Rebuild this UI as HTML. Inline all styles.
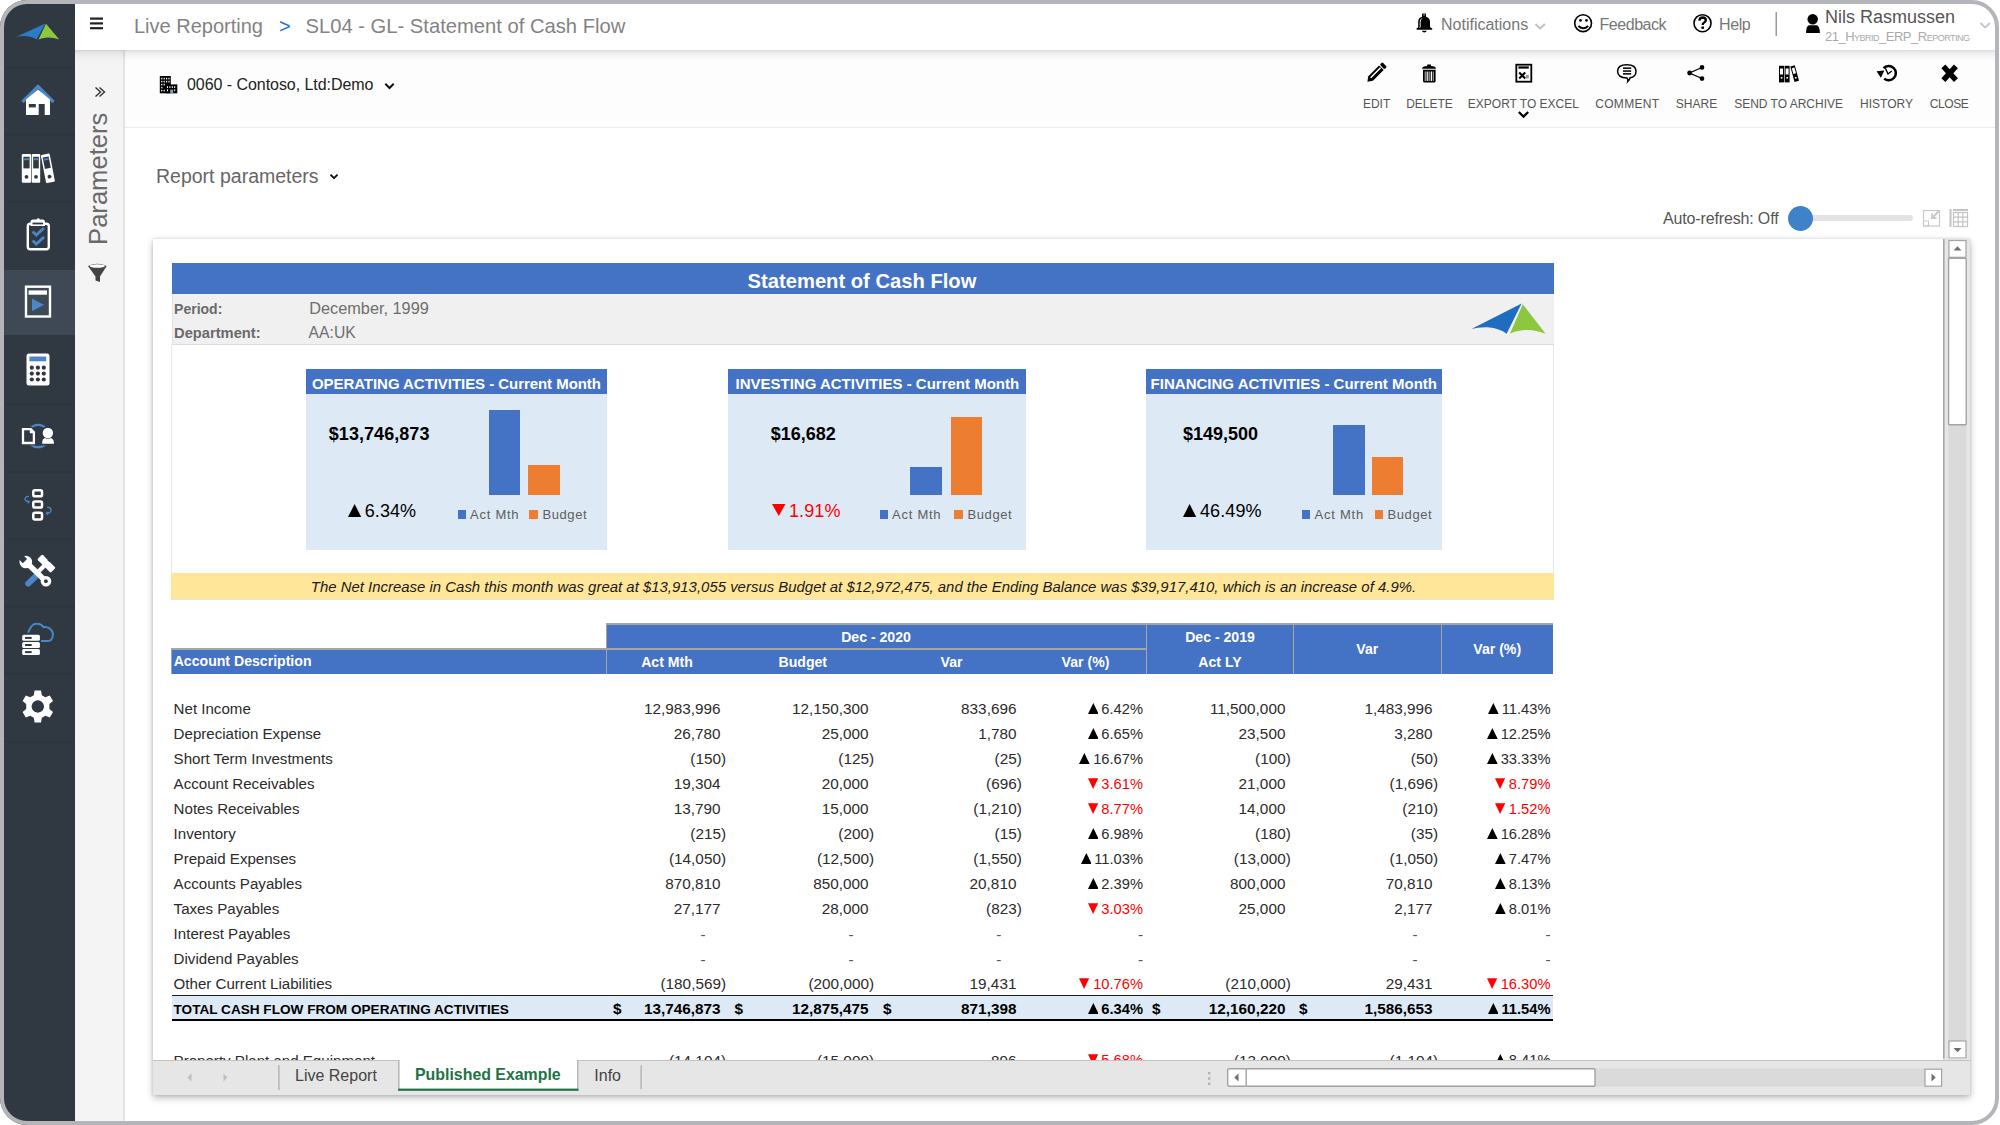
<!DOCTYPE html>
<html><head><meta charset="utf-8">
<style>
*{box-sizing:border-box;margin:0;padding:0}
html,body{width:2000px;height:1125px;overflow:hidden;background:#fff;font-family:"Liberation Sans",sans-serif}
.a{position:absolute}
.t{position:absolute;white-space:nowrap;line-height:1}
#side{left:0;top:0;width:75px;height:1125px;background:#303841}
#top{left:75px;top:0;width:1925px;height:50px;background:#fff;z-index:3}
#topsh{left:75px;top:50px;width:1925px;height:12px;background:linear-gradient(rgba(0,0,0,0.15),rgba(0,0,0,0.09) 1.5px,rgba(0,0,0,0.05) 4px,rgba(0,0,0,0.02) 8px,rgba(0,0,0,0) 12px);z-index:3}
#param{left:75px;top:50px;width:50px;height:1075px;background:#f4f4f4;border-right:2px solid #e3e3e3}
#tool{left:125px;top:50px;width:1875px;height:78px;background:#fdfdfd;border-bottom:1px solid #ebebeb}
.lbl{position:absolute;top:98px;font-size:12px;color:#555;white-space:nowrap;line-height:1}
.ico{position:absolute}
</style></head><body>

<!-- sidebar -->
<div id="side" class="a"></div>
<svg class="a" style="left:0;top:0;z-index:2" width="75" height="1125">
<rect x="0" y="270" width="75" height="65" fill="#3e4955"/>
<g fill="#2c333c">
<rect x="0" y="67" width="75" height="1"/><rect x="0" y="134.4" width="75" height="1"/><rect x="0" y="201.8" width="75" height="1"/>
<rect x="0" y="404" width="75" height="1"/><rect x="0" y="471.4" width="75" height="1"/><rect x="0" y="538.8" width="75" height="1"/>
<rect x="0" y="606.2" width="75" height="1"/><rect x="0" y="673.6" width="75" height="1"/><rect x="0" y="741" width="75" height="1"/>
</g>
<!-- logo -->
<g transform="translate(16 23.5) scale(0.5836 0.53) translate(-1471.4 -303.6)">
<path d="M1471.4 329 L1521.6 303.6 L1506.6 333.8 Q1500 328.5 1487.6 327.3 Q1478 327 1471.4 329Z" fill="#2a7bc8"/>
<path d="M1522.8 304.2 L1545.6 333.8 Q1535 329.5 1525.1 330 Q1516 330.5 1509.9 333.8Z" fill="#8dc63f"/>
</g>
<!-- home -->
<path d="M22.5 102 L38 86.5 L53.5 102" fill="none" stroke="#4a86c8" stroke-width="3.2" stroke-linejoin="miter"/>
<path d="M26 99.5 L38 89.5 L50 99.5 V115 H26Z" fill="#fff"/>
<rect x="28.8" y="104" width="7" height="3.4" fill="#303841"/>
<rect x="38.7" y="104" width="6" height="11" fill="#303841"/>
<!-- binders -->
<g>
<rect x="21.8" y="154" width="9.3" height="28.7" rx="1" fill="#fff"/>
<rect x="23.4" y="156.8" width="6.2" height="11.6" fill="#303841"/>
<rect x="24" y="158.2" width="5" height="2" fill="#4a86c8"/>
<circle cx="26.5" cy="176.8" r="1.9" fill="#303841"/>
<rect x="31.7" y="154" width="8.5" height="28.7" rx="1" fill="#fff"/>
<rect x="33.2" y="156.8" width="5.6" height="11.6" fill="#303841"/>
<rect x="33.7" y="158.2" width="4.6" height="2" fill="#4a86c8"/>
<circle cx="36" cy="176.8" r="1.9" fill="#303841"/>
<g transform="rotate(-11 47.8 168)">
<rect x="43.3" y="154" width="9" height="28.7" rx="1" fill="#fff"/>
<rect x="44.8" y="156.8" width="6" height="11.6" fill="#303841"/>
<rect x="45.3" y="158.2" width="5" height="2" fill="#4a86c8"/>
<circle cx="47.8" cy="176.8" r="1.9" fill="#303841"/>
</g>
</g>
<!-- clipboard -->
<rect x="27.8" y="223.8" width="21" height="25.4" rx="2.5" fill="none" stroke="#fff" stroke-width="2.4"/>
<path d="M30.5 226 V222 Q30.5 219.5 33 219.5 H36.5 Q38 217 40 219.5 H43 Q45 219.5 45 222 V226Z" fill="#fff"/>
<rect x="32.5" y="222.6" width="10.5" height="1.8" fill="#303841"/>
<path d="M32.6 231.5 L36.3 235 L44 228" fill="none" stroke="#4a86c8" stroke-width="3"/>
<path d="M32.6 240.5 L36.3 244 L44 237" fill="none" stroke="#4a86c8" stroke-width="3"/>
<!-- report -->
<rect x="26" y="286.7" width="24" height="29.8" fill="none" stroke="#fff" stroke-width="2.4"/>
<rect x="28.6" y="290.4" width="18.4" height="4.3" fill="#fff"/>
<path d="M32 298.5 L44 304.8 L32 311.2Z" fill="#4a86c8"/>
<!-- calculator -->
<rect x="26.5" y="353.6" width="23" height="32" rx="2.5" fill="#fff"/>
<rect x="29.4" y="356.5" width="16.8" height="4.8" fill="#4a86c8"/>
<g fill="#303841">
<circle cx="31.8" cy="367.7" r="2.1"/><circle cx="37.9" cy="367.7" r="2.1"/><circle cx="43.8" cy="367.7" r="2.1"/>
<circle cx="31.8" cy="373.6" r="2.1"/><circle cx="37.9" cy="373.6" r="2.1"/><circle cx="43.8" cy="373.6" r="2.1"/>
<circle cx="31.8" cy="379.5" r="2.1"/><circle cx="37.9" cy="379.5" r="2.1"/><circle cx="43.8" cy="379.5" r="2.1"/>
</g>
<!-- doc-user -->
<circle cx="38.1" cy="436" r="11.2" fill="none" stroke="#4a86c8" stroke-width="2.2"/>
<path d="M20.6 426.6 H31.5 L36.6 431.8 V445.6 H20.6Z" fill="#303841"/>
<path d="M23 429.2 H30.8 L33.9 432.3 V443 H23Z" fill="none" stroke="#fff" stroke-width="2.3"/>
<path d="M29.8 429.5 H31 L33.6 432.1 V433.2 H29.8Z" fill="#fff"/>
<circle cx="47.9" cy="433.1" r="7" fill="#303841"/>
<path d="M40.6 445.5 Q40.2 436 47.9 436 Q55.6 436 55.2 445.5Z" fill="#303841"/>
<circle cx="47.9" cy="433" r="5.2" fill="#fff"/>
<path d="M42.2 443.8 Q42 438.6 45 437.9 Q47.9 439.6 50.8 437.9 Q53.9 438.6 54 443.8Z" fill="#fff"/>
<!-- workflow -->
<g fill="none" stroke="#fff" stroke-width="2.5">
<rect x="33.3" y="490.3" width="8.7" height="6" rx="1.6"/>
<rect x="33.3" y="501.5" width="8.7" height="6" rx="1.6"/>
<rect x="33.3" y="512.7" width="8.7" height="6.7" rx="1.6"/>
</g>
<path d="M29 496.5 Q24.8 496.2 25 499.2 Q25.3 501.5 28.6 501.8" fill="none" stroke="#4a86c8" stroke-width="1.3"/>
<path d="M27.6 500.4 L29.3 501.9 L27.6 503.2" fill="none" stroke="#4a86c8" stroke-width="1.1"/>
<path d="M46.2 513.2 Q51.3 513.2 51 509.8 Q50.6 507.3 47 507.2" fill="none" stroke="#4a86c8" stroke-width="1.3"/>
<path d="M48.2 512 L46.3 513.3 L48 514.8" fill="none" stroke="#4a86c8" stroke-width="1.1"/>
<!-- tools -->
<g transform="rotate(45 46.5 563.5)"><rect x="37" y="560" width="19" height="7.2" rx="1.2" fill="#fff"/><rect x="44.5" y="556" width="3" height="4.5" fill="#303841"/></g>
<path d="M46.5 563.5 L37 573" stroke="#fff" stroke-width="4.2"/>
<path d="M35 577 L28.2 583.6" stroke="#303841" stroke-width="9" stroke-linecap="round"/>
<path d="M35 577 L28.2 583.6" stroke="#4a86c8" stroke-width="6" stroke-linecap="round"/>
<path d="M27.5 563.5 L45.8 581.2" stroke="#fff" stroke-width="5.4"/>
<circle cx="25.8" cy="562" r="6.3" fill="#fff"/>
<path d="M23.6 559.8 L19 555.2 M23.6 559.8 L28 555.5" stroke="#303841" stroke-width="0"/>
<g transform="rotate(-45 25.8 562)"><rect x="22.8" y="553" width="6" height="7.8" fill="#303841"/></g>
<circle cx="46" cy="581.3" r="5.3" fill="#fff"/>
<circle cx="45.9" cy="581.2" r="1.9" fill="#303841"/>
<!-- cloud -->
<path d="M28.2 632.6 Q31.5 623.2 37 623.8 Q41.5 624 43.6 627.2 Q47.6 626 50.8 629.5 Q53.8 633 52.6 637 Q51.5 641.1 47.5 641.1 H40.3" fill="none" stroke="#4a86c8" stroke-width="2"/>
<path d="M21 633.6 H41.1 V656.1 H21Z" fill="#303841"/>
<g fill="#fff">
<rect x="22.2" y="634.8" width="17.7" height="6" rx="1.5"/>
<rect x="22.2" y="641.9" width="17.7" height="6" rx="1.5"/>
<rect x="22.2" y="649" width="17.7" height="6" rx="1.5"/>
</g>
<g fill="#303841"><rect x="25" y="636.9" width="6.7" height="2"/><rect x="25" y="644" width="6.7" height="2"/><rect x="25" y="651.1" width="6.7" height="2"/></g>
<!-- gear -->
<g transform="translate(37.8 706.5)">
<path fill="#fff" fill-rule="evenodd" d="M-3.2 -16 H3.2 L4 -11.3 L7.6 -9.3 L12 -11 L15.2 -5.5 L11.6 -2.4 V2.4 L15.2 5.5 L12 11 L7.6 9.3 L4 11.3 L3.2 16 H-3.2 L-4 11.3 L-7.6 9.3 L-12 11 L-15.2 5.5 L-11.6 2.4 V-2.4 L-15.2 -5.5 L-12 -11 L-7.6 -9.3 L-4 -11.3Z M0 -6.2 A6.2 6.2 0 1 0 0.01 -6.2Z"/>
</g>
</svg>

<div id="top" class="a"></div>
<div id="topsh" class="a"></div>
<div id="param" class="a"></div>
<div id="tool" class="a"></div>


<!-- top bar content -->
<svg class="a" style="left:0;top:0;z-index:4" width="2000" height="130">
<g fill="#222"><rect x="90" y="17.5" width="13" height="2.2"/><rect x="90" y="22.3" width="13" height="2.2"/><rect x="90" y="27.1" width="13" height="2.2"/></g>
<!-- bell -->
<path d="M1422 16.8 V14.2 Q1422 13.6 1422.8 13.6 H1425.4 Q1426 13.6 1426 14.2 V16.8 Q1430 17.6 1430 22 V26.8 Q1430.5 28 1432.2 28.2 V29.8 H1416.6 V28.2 Q1418 28 1418.2 26.8 V22 Q1418.2 17.6 1422 16.8Z" fill="#000"/>
<path d="M1424 15.4 A0.6 0.6 0 1 1 1424.1 15.4Z" fill="#fff"/>
<path d="M1421.9 18.3 Q1420.2 19.2 1420.2 22.5 V26.8 Q1420 27.7 1419.5 28" fill="none" stroke="#fff" stroke-width="0.9"/>
<path d="M1421.8 30.8 H1426.8 Q1426.3 32.6 1424.3 32.6 Q1422.3 32.6 1421.8 30.8Z" fill="#000"/>
<!-- smiley -->
<circle cx="1583.1" cy="23.2" r="8.4" fill="none" stroke="#000" stroke-width="1.6"/>
<circle cx="1580.5" cy="20.4" r="1.3" fill="#000"/><circle cx="1586.5" cy="20.4" r="1.3" fill="#000"/>
<path d="M1578.4 26 Q1583.3 30.6 1588.2 26" fill="none" stroke="#000" stroke-width="1.8"/>
<!-- help -->
<circle cx="1702.5" cy="23.2" r="8.5" fill="none" stroke="#000" stroke-width="1.6"/>
<path d="M1699.4 20.6 Q1699.6 17.5 1702.6 17.5 Q1705.8 17.6 1705.8 20.3 Q1705.7 22 1703.6 23 Q1702.7 23.5 1702.7 25" fill="none" stroke="#000" stroke-width="2.4"/>
<rect x="1701.4" y="26.5" width="2.6" height="2.4" fill="#000"/>
<!-- divider -->
<rect x="1775.5" y="12" width="1.5" height="24" fill="#9a9a9a"/>
<!-- user -->
<circle cx="1812.7" cy="19.3" r="5.2" fill="#000"/>
<path d="M1806.1 33.1 Q1806 26.2 1809 25.2 H1816.6 Q1819.9 26.2 1819.9 33.1Z" fill="#000"/>
<!-- chevrons -->
<path d="M1535.5 24 L1540.2 28.6 L1544.9 24" fill="none" stroke="#bdbdbd" stroke-width="1.8"/>
<path d="M1980.5 23 L1985.2 27.6 L1989.9 23" fill="none" stroke="#c4c4c4" stroke-width="1.8"/>
</svg>
<div class="t" style="left:134px;top:16px;font-size:20px;color:#838383;z-index:4">Live Reporting</div>
<div class="t" style="left:279px;top:16px;font-size:20px;color:#2476c6;z-index:4">&gt;</div>
<div class="t" style="left:305.5px;top:15.9px;font-size:20.2px;color:#838383;z-index:4">SL04 - GL- Statement of Cash Flow</div>
<div class="t" style="left:1441px;top:16.5px;font-size:16px;color:#777;z-index:4">Notifications</div>
<div class="t" style="left:1599.5px;top:16.5px;font-size:16px;color:#777;letter-spacing:-0.45px;z-index:4">Feedback</div>
<div class="t" style="left:1719px;top:16.5px;font-size:16px;color:#777;letter-spacing:-0.4px;z-index:4">Help</div>
<div class="t" style="left:1825px;top:7.8px;font-size:18px;color:#555;z-index:4">Nils Rasmussen</div>
<div class="t" style="left:1825px;top:30px;font-size:13px;color:#aaa;font-variant:small-caps;letter-spacing:-0.5px;z-index:4">21_Hybrid_ERP_Reporting</div>

<!-- params panel -->
<svg class="a" style="left:75px;top:50px;z-index:2" width="50" height="300">
<path d="M20.5 37 L25.5 41.5 L20.5 46 M24.5 37 L29.5 41.5 L24.5 46" fill="none" stroke="#333" stroke-width="1.4" transform="translate(0 0.5)"/>
<path d="M13 216 Q22.3 211.5 31.7 216 L25 226.5 V232 L20.5 230.5 V226.5Z" fill="#444"/><ellipse cx="22.3" cy="216" rx="7.6" ry="1.7" fill="#fff"/>
</svg>
<div class="t" style="left:31.9px;top:166.2px;width:132.6px;height:25.6px;font-size:25.6px;line-height:25.6px;color:#6a6a6a;transform:rotate(-90deg);transform-origin:center;z-index:2;text-align:center">Parameters</div>

<!-- toolbar -->
<svg class="a" style="left:1350px;top:55px;z-index:2" width="650" height="70">
<g transform="translate(-1350 -55)">
<!-- pencil -->
<g transform="translate(1376 73.1) rotate(-45)">
<path d="M-12.2 0 L-7.6 -3.3 H7.6 V3.3 H-7.6Z" fill="#000"/>
<rect x="-7" y="-1.3" width="14" height="1.5" fill="#fff"/>
<path d="M-11 0 L-9.6 -0.9 V0.9Z" fill="#fff" opacity="0"/>
<rect x="8.6" y="-3.3" width="3.6" height="6.6" rx="1.3" fill="#000"/>
</g>
<!-- trash -->
<path d="M1427.2 64.6 H1431 V66 Q1436 66.2 1436 68.8 H1422 Q1422 66.2 1427.2 66Z" fill="#000"/>
<path d="M1423 69.8 H1435.6 V81 Q1435.6 82.5 1434 82.5 H1424.6 Q1423 82.5 1423 81Z" fill="#000"/>
<g fill="#fff"><rect x="1426.6" y="71.5" width="1.2" height="9.5"/><rect x="1430.8" y="71.5" width="1.2" height="9.5"/></g>
<g fill="#888"><rect x="1424.6" y="71.5" width="1.4" height="9.5"/><rect x="1428.4" y="71.5" width="1.8" height="9.5"/><rect x="1432.6" y="71.5" width="1.4" height="9.5"/></g>
<!-- excel -->
<rect x="1516.3" y="64.7" width="15" height="17" fill="none" stroke="#000" stroke-width="1.8"/>
<rect x="1518.4" y="66.4" width="10.4" height="2.2" fill="#000"/>
<path d="M1519.2 72.4 L1525.2 78.4 M1525.2 72.4 L1519.2 78.4" stroke="#000" stroke-width="2.1"/>
<rect x="1525.8" y="74.8" width="3" height="3.6" fill="#999"/>
<path d="M1518.8 112 L1523.5 116.6 L1528.2 112" fill="none" stroke="#000" stroke-width="2.2"/>
<!-- comment -->
<path d="M1626.8 64.8 Q1636 64.8 1636 71.3 Q1636 77 1630 77.8 Q1629.5 80 1627.8 81.5 Q1628.3 79.5 1627 78 Q1617.6 77.8 1617.6 71.3 Q1617.6 64.8 1626.8 64.8Z" fill="none" stroke="#000" stroke-width="1.5"/>
<g fill="#000"><rect x="1623" y="67.4" width="8.2" height="1.5"/><rect x="1623" y="70.3" width="8.2" height="1.5"/><rect x="1623" y="73.1" width="8.2" height="1.5"/></g>
<!-- share -->
<path d="M1702 67.5 L1689.5 73 L1702 78.5" fill="none" stroke="#000" stroke-width="1.3"/>
<circle cx="1689.6" cy="73" r="2.4" fill="#000"/><circle cx="1702" cy="67.4" r="2.3" fill="#000"/><circle cx="1702" cy="78.6" r="2.3" fill="#000"/>
<!-- archive -->
<g fill="#000">
<rect x="1779" y="65.8" width="5" height="16.6"/><rect x="1784.6" y="65.8" width="5" height="16.6"/>
<path d="M1790.3 66.5 L1794.8 65.3 L1799 80.8 L1794.5 82Z"/>
</g>
<g fill="#fff">
<rect x="1780" y="68.5" width="3" height="6"/><rect x="1785.6" y="68.5" width="3" height="6"/>
<rect x="1780.8" y="77" width="1.6" height="1.6"/><rect x="1786.4" y="77" width="1.6" height="1.6"/>
<path d="M1791.8 68.2 L1794.4 67.5 L1796 73.3 L1793.4 74Z"/>
<rect x="1795" y="77" width="1.6" height="1.6"/>
</g>
<!-- history -->
<path d="M1883.6 68.2 A7.1 7.1 0 1 1 1884.2 78.6" fill="none" stroke="#000" stroke-width="2.5"/>
<path d="M1876.6 71.2 L1884.4 70.6 L1880.8 77.8Z" fill="#000"/>
<path d="M1885.4 68.3 L1888 74 L1891.8 71" fill="none" stroke="#000" stroke-width="1.4"/>
<!-- close -->
<path d="M1945.2 68.4 L1954.1 78.1 M1954.1 68.4 L1945.2 78.1" stroke="#000" stroke-width="5.4" stroke-linecap="square"/>
</g>
</svg>
<div class="lbl" style="left:1276.6px;width:200px;text-align:center">EDIT</div>
<div class="lbl" style="left:1329.5px;width:200px;text-align:center">DELETE</div>
<div class="lbl" style="left:1423.4px;width:200px;text-align:center">EXPORT TO EXCEL</div>
<div class="lbl" style="left:1527.3px;width:200px;text-align:center;letter-spacing:0.3px">COMMENT</div>
<div class="lbl" style="left:1596.5px;width:200px;text-align:center">SHARE</div>
<div class="lbl" style="left:1688.6px;width:200px;text-align:center">SEND TO ARCHIVE</div>
<div class="lbl" style="left:1786.5px;width:200px;text-align:center">HISTORY</div>
<div class="lbl" style="left:1849px;width:200px;text-align:center;letter-spacing:-0.4px">CLOSE</div>

<!-- company selector -->
<svg class="a" style="left:155px;top:70px;z-index:2" width="250" height="30">
<g transform="translate(-155 -70)">
<rect x="159.8" y="76" width="11" height="17.3" fill="#000"/>
<rect x="165.5" y="84.4" width="11.8" height="8.9" fill="#000"/>
<g fill="#fff">
<rect x="161.2" y="77.8" width="1.2" height="1.6"/><rect x="163.6" y="77.8" width="1.2" height="1.6"/><rect x="166" y="77.8" width="1.2" height="1.6"/><rect x="168.4" y="77.8" width="1.2" height="1.6"/>
<rect x="161.2" y="80.8" width="1.2" height="1.6"/><rect x="163.6" y="80.8" width="1.2" height="1.6"/><rect x="166" y="80.8" width="1.2" height="1.6"/><rect x="168.4" y="80.8" width="1.2" height="1.6"/>
<rect x="161.2" y="83.8" width="1.2" height="1.6"/><rect x="163.6" y="83.8" width="1.2" height="1.6"/>
<rect x="161.2" y="86.8" width="1.2" height="1.6"/><rect x="161.2" y="89.8" width="1.2" height="1.6"/><rect x="163.6" y="89.8" width="1.2" height="1.6"/>
<rect x="167" y="86.2" width="1" height="1.8"/><rect x="169.4" y="86.2" width="1" height="1.8"/><rect x="171.8" y="86.2" width="1" height="1.8"/><rect x="174.2" y="86.2" width="1" height="1.8"/>
<rect x="167" y="89.4" width="1" height="1.8"/><rect x="174.2" y="89.4" width="1" height="1.8"/>
</g>
<rect x="170.2" y="89.6" width="3" height="3.7" fill="#7a9cc6"/>
<path d="M385.3 83.8 L389.5 88 L393.7 83.8" fill="none" stroke="#111" stroke-width="2"/>
</g>
</svg>
<div class="t" style="left:187px;top:77px;font-size:16px;color:#222;letter-spacing:-0.05px;z-index:2">0060 - Contoso, Ltd:Demo</div>

<!-- report parameters -->
<div class="t" style="left:156px;top:166.5px;font-size:19.5px;color:#666;z-index:2">Report parameters</div>
<svg class="a" style="left:325px;top:170px;z-index:2" width="20" height="15">
<path d="M5.5 4.6 L9 8.1 L12.5 4.6" fill="none" stroke="#111" stroke-width="1.9"/>
</svg>

<!-- auto refresh -->
<div class="t" style="left:1663px;top:210.5px;font-size:16px;color:#555;letter-spacing:-0.15px;z-index:2">Auto-refresh: Off</div>
<div class="a" style="left:1800px;top:215px;width:113px;height:6px;border-radius:3px;background:#e3e3e3;z-index:2"></div>
<div class="a" style="left:1788px;top:206px;width:25px;height:25px;border-radius:50%;background:#4082c8;z-index:2"></div>
<svg class="a" style="left:1920px;top:205px;z-index:2" width="55" height="26">
<g transform="translate(-1920 -205)">
<rect x="1923.5" y="210.5" width="16" height="15.5" fill="none" stroke="#c9c9c9" stroke-width="1.2"/>
<path d="M1939 211 L1932 218 M1932 213.5 V218 H1936.5" fill="none" stroke="#c9c9c9" stroke-width="2"/>
<rect x="1923.5" y="221" width="5" height="5" fill="none" stroke="#c9c9c9" stroke-width="1"/>
<rect x="1949.5" y="209" width="2" height="18" fill="#c4c4c4"/>
<rect x="1953" y="209" width="15" height="2" fill="#c4c4c4"/>
<g fill="none" stroke="#c4c4c4" stroke-width="1.2"><rect x="1953.5" y="212.5" width="14" height="14"/><path d="M1958.2 212.5 V226.5 M1962.8 212.5 V226.5 M1953.5 217.2 H1967.5 M1953.5 221.8 H1967.5"/></g>
</g>
</svg>

<!--REPORT-->
<div class="a" style="left:153px;top:239px;width:1817px;height:856px;background:#fff;box-shadow:0 3px 7px rgba(0,0,0,0.26),0 0 3px rgba(0,0,0,0.14);z-index:1"></div>
<div id="sheet" class="a" style="left:153px;top:239px;width:1790px;height:821px;overflow:hidden;background:#fff;z-index:1">
<div class="a" style="left:18.5px;top:24.3px;width:1382.0px;height:30.7px;background:#4472c4"></div>
<div class="t" style="left:409.0px;width:600px;text-align:center;top:31.9px;font-size:20.2px;color:#fff;font-weight:bold">Statement of Cash Flow</div>
<div class="a" style="left:18.5px;top:55.0px;width:1382.0px;height:51.0px;background:#f0f0f0;border-bottom:1.5px solid #d9dee6;border-left:1px solid #dde3ec"></div>
<div class="t" style="left:21.1px;top:62.6px;font-size:14px;color:#6a6a6a;font-weight:bold">Period:</div>
<div class="t" style="left:21.1px;top:87.0px;font-size:14.7px;color:#6a6a6a;font-weight:bold">Department:</div>
<div class="t" style="left:156.3px;top:60.7px;font-size:16.3px;color:#6e6e6e">December, 1999</div>
<div class="t" style="left:155.6px;top:86.1px;font-size:15.7px;color:#6e6e6e">AA:UK</div>
<svg class="a" style="left:1315px;top:61px" width="82" height="40"><g transform="translate(-1468 -300)"><path d="M1471.4 329 L1521.6 303.6 L1506.6 333.8 Q1500 328.5 1487.6 327.3 Q1478 327 1471.4 329Z" fill="#1f6dc0"/><path d="M1522.8 304.2 L1545.6 333.8 Q1535 329.5 1525.1 330 Q1516 330.5 1509.9 333.8Z" fill="#8dc63f"/></g></svg>
<div class="a" style="left:18.0px;top:106.0px;width:1.0px;height:228.0px;background:#e3e7ee"></div>
<div class="a" style="left:1399.6px;top:106.0px;width:1.0px;height:228.0px;background:#e3e7ee"></div>
<div class="a" style="left:152.5px;top:130.2px;width:301.5px;height:25.0px;background:#4472c4"></div>
<div class="a" style="left:152.5px;top:155.2px;width:301.5px;height:155.4px;background:#dde9f5"></div>
<div class="t" style="left:158.9px;top:136.9px;font-size:15px;font-weight:bold;color:#fff;letter-spacing:-0.05px">OPERATING ACTIVITIES - Current Month</div>
<div class="t" style="left:175.8px;top:186.1px;font-size:18px;font-weight:bold;color:#000;letter-spacing:0.05px">$13,746,873</div>
<svg class="a" style="left:195.0px;top:265.4px" width="14" height="13"><path d="M6.6 0 L13.2 13 H0Z" fill="#000"/></svg>
<div class="t" style="left:211.7px;top:263.3px;font-size:18px;color:#000;letter-spacing:0.1px">6.34%</div>
<div class="a" style="left:336.2px;top:171.2px;width:30.4px;height:85.1px;background:#4472c4"></div>
<div class="a" style="left:375.4px;top:225.9px;width:31.3px;height:30.4px;background:#ed7d31"></div>
<div class="a" style="left:304.7px;top:271.0px;width:8.6px;height:8.6px;background:#4472c4"></div>
<div class="t" style="left:317.0px;top:269.0px;font-size:13px;color:#5e5e5e;letter-spacing:0.75px">Act Mth</div>
<div class="a" style="left:376.3px;top:271.0px;width:8.6px;height:8.6px;background:#ed7d31"></div>
<div class="t" style="left:389.4px;top:269.0px;font-size:13px;color:#5e5e5e;letter-spacing:0.6px">Budget</div>
<div class="a" style="left:575.2px;top:130.2px;width:297.6px;height:25.0px;background:#4472c4"></div>
<div class="a" style="left:575.2px;top:155.2px;width:297.6px;height:155.4px;background:#dde9f5"></div>
<div class="t" style="left:582.5px;top:136.9px;font-size:15px;font-weight:bold;color:#fff;letter-spacing:0.0px">INVESTING ACTIVITIES - Current Month</div>
<div class="t" style="left:617.7px;top:186.1px;font-size:18px;font-weight:bold;color:#000;letter-spacing:0px">$16,682</div>
<svg class="a" style="left:618.6px;top:265.0px" width="14" height="13"><path d="M0 0 H13.5 L6.75 12Z" fill="#f00"/></svg>
<div class="t" style="left:636.0px;top:263.3px;font-size:18px;color:#f00;letter-spacing:0.1px">1.91%</div>
<div class="a" style="left:757.0px;top:227.5px;width:32.0px;height:28.8px;background:#4472c4"></div>
<div class="a" style="left:798.0px;top:177.6px;width:31.0px;height:78.7px;background:#ed7d31"></div>
<div class="a" style="left:726.5px;top:271.0px;width:8.6px;height:8.6px;background:#4472c4"></div>
<div class="t" style="left:739.0px;top:269.0px;font-size:13px;color:#5e5e5e;letter-spacing:0.75px">Act Mth</div>
<div class="a" style="left:801.0px;top:271.0px;width:8.6px;height:8.6px;background:#ed7d31"></div>
<div class="t" style="left:814.5px;top:269.0px;font-size:13px;color:#5e5e5e;letter-spacing:0.6px">Budget</div>
<div class="a" style="left:993.0px;top:130.2px;width:296.0px;height:25.0px;background:#4472c4"></div>
<div class="a" style="left:993.0px;top:155.2px;width:296.0px;height:155.4px;background:#dde9f5"></div>
<div class="t" style="left:997.6px;top:136.9px;font-size:15px;font-weight:bold;color:#fff;letter-spacing:0.01px">FINANCING ACTIVITIES - Current Month</div>
<div class="t" style="left:1029.9px;top:186.1px;font-size:18px;font-weight:bold;color:#000;letter-spacing:0px">$149,500</div>
<svg class="a" style="left:1030.4px;top:265.4px" width="14" height="13"><path d="M6.6 0 L13.2 13 H0Z" fill="#000"/></svg>
<div class="t" style="left:1047.0px;top:263.3px;font-size:18px;color:#000;letter-spacing:0.1px">46.49%</div>
<div class="a" style="left:1180.0px;top:186.0px;width:31.5px;height:70.3px;background:#4472c4"></div>
<div class="a" style="left:1219.0px;top:218.4px;width:31.3px;height:37.9px;background:#ed7d31"></div>
<div class="a" style="left:1148.9px;top:271.0px;width:8.6px;height:8.6px;background:#4472c4"></div>
<div class="t" style="left:1161.6px;top:269.0px;font-size:13px;color:#5e5e5e;letter-spacing:0.75px">Act Mth</div>
<div class="a" style="left:1221.7px;top:271.0px;width:8.6px;height:8.6px;background:#ed7d31"></div>
<div class="t" style="left:1234.5px;top:269.0px;font-size:13px;color:#5e5e5e;letter-spacing:0.6px">Budget</div>
<div class="a" style="left:18.0px;top:334.4px;width:1382.6px;height:26.4px;background:#ffe699;border-bottom:1.5px solid #e3e3e3"></div>
<div class="t" style="left:157.8px;top:341.4px;font-size:14.92px;font-style:italic;color:#1a1a1a;letter-spacing:0.015px">The Net Increase in Cash this month was great at $13,913,055 versus Budget at $12,972,475, and the Ending Balance was $39,917,410, which is an increase of 4.9%.</div>
<div class="a" style="left:17.7px;top:409.0px;width:435.3px;height:25.5px;background:#4472c4;border-top:2px solid #a5a5a5;border-left:1px solid #a5a5a5"></div>
<div class="a" style="left:453.0px;top:384.0px;width:947.4px;height:50.5px;background:#4472c4;border-top:2px solid #a5a5a5"></div>
<div class="a" style="left:453.0px;top:409.0px;width:540.0px;height:2.0px;background:#a5a5a5"></div>
<div class="a" style="left:452.5px;top:386.0px;width:1.6px;height:48.5px;background:#a5a5a5"></div>
<div class="a" style="left:992.7px;top:386.0px;width:1.6px;height:48.5px;background:#a5a5a5"></div>
<div class="a" style="left:1139.8px;top:386.0px;width:1.6px;height:48.5px;background:#a5a5a5"></div>
<div class="a" style="left:1287.5px;top:386.0px;width:1.6px;height:48.5px;background:#a5a5a5"></div>
<div class="t" style="left:20.7px;top:414.8px;font-size:14.1px;color:#fff;font-weight:bold">Account Description</div>
<div class="t" style="left:423.0px;width:600px;text-align:center;top:390.9px;font-size:14.1px;color:#fff;font-weight:bold">Dec - 2020</div>
<div class="t" style="left:214.0px;width:600px;text-align:center;top:416.1px;font-size:14.1px;color:#fff;font-weight:bold">Act Mth</div>
<div class="t" style="left:349.8px;width:600px;text-align:center;top:416.1px;font-size:14.1px;color:#fff;font-weight:bold">Budget</div>
<div class="t" style="left:498.5px;width:600px;text-align:center;top:416.1px;font-size:14.1px;color:#fff;font-weight:bold">Var</div>
<div class="t" style="left:632.5px;width:600px;text-align:center;top:416.1px;font-size:14.1px;color:#fff;font-weight:bold">Var (%)</div>
<div class="t" style="left:767.0px;width:600px;text-align:center;top:390.9px;font-size:14.1px;color:#fff;font-weight:bold">Dec - 2019</div>
<div class="t" style="left:767.0px;width:600px;text-align:center;top:416.1px;font-size:14.1px;color:#fff;font-weight:bold">Act LY</div>
<div class="t" style="left:914.3px;width:600px;text-align:center;top:402.5px;font-size:14.1px;color:#fff;font-weight:bold">Var</div>
<div class="t" style="left:1044.2px;width:600px;text-align:center;top:402.5px;font-size:14.1px;color:#fff;font-weight:bold">Var (%)</div>
<div class="t" style="left:20.6px;top:462.1px;font-size:15.1px;color:#2b2b2b">Net Income</div>
<div class="t" style="right:1222.4px;top:462.4px;font-size:15.3px;color:#2b2b2b">12,983,996</div>
<div class="t" style="right:1074.4px;top:462.4px;font-size:15.3px;color:#2b2b2b">12,150,300</div>
<div class="t" style="right:926.6px;top:462.4px;font-size:15.3px;color:#2b2b2b">833,696</div>
<div class="t" style="right:800.0px;top:463.0px;font-size:14.7px;color:#2b2b2b"><svg width="10.7" height="11" style="vertical-align:baseline;margin-right:3px"><path d="M5.35 0 L10.7 11 H0Z" fill="#000"/></svg>6.42%</div>
<div class="t" style="right:657.6px;top:462.4px;font-size:15.3px;color:#2b2b2b">11,500,000</div>
<div class="t" style="right:510.4px;top:462.4px;font-size:15.3px;color:#2b2b2b">1,483,996</div>
<div class="t" style="right:392.5px;top:463.0px;font-size:14.7px;color:#2b2b2b"><svg width="10.7" height="11" style="vertical-align:baseline;margin-right:3px"><path d="M5.35 0 L10.7 11 H0Z" fill="#000"/></svg>11.43%</div>
<div class="t" style="left:20.6px;top:487.1px;font-size:15.1px;color:#2b2b2b">Depreciation Expense</div>
<div class="t" style="right:1222.4px;top:487.4px;font-size:15.3px;color:#2b2b2b">26,780</div>
<div class="t" style="right:1074.4px;top:487.4px;font-size:15.3px;color:#2b2b2b">25,000</div>
<div class="t" style="right:926.6px;top:487.4px;font-size:15.3px;color:#2b2b2b">1,780</div>
<div class="t" style="right:800.0px;top:488.0px;font-size:14.7px;color:#2b2b2b"><svg width="10.7" height="11" style="vertical-align:baseline;margin-right:3px"><path d="M5.35 0 L10.7 11 H0Z" fill="#000"/></svg>6.65%</div>
<div class="t" style="right:657.6px;top:487.4px;font-size:15.3px;color:#2b2b2b">23,500</div>
<div class="t" style="right:510.4px;top:487.4px;font-size:15.3px;color:#2b2b2b">3,280</div>
<div class="t" style="right:392.5px;top:488.0px;font-size:14.7px;color:#2b2b2b"><svg width="10.7" height="11" style="vertical-align:baseline;margin-right:3px"><path d="M5.35 0 L10.7 11 H0Z" fill="#000"/></svg>12.25%</div>
<div class="t" style="left:20.6px;top:512.1px;font-size:15.1px;color:#2b2b2b">Short Term Investments</div>
<div class="t" style="right:1217.0px;top:512.4px;font-size:15.3px;color:#2b2b2b">(150)</div>
<div class="t" style="right:1069.0px;top:512.4px;font-size:15.3px;color:#2b2b2b">(125)</div>
<div class="t" style="right:921.2px;top:512.4px;font-size:15.3px;color:#2b2b2b">(25)</div>
<div class="t" style="right:800.0px;top:513.0px;font-size:14.7px;color:#2b2b2b"><svg width="10.7" height="11" style="vertical-align:baseline;margin-right:3px"><path d="M5.35 0 L10.7 11 H0Z" fill="#000"/></svg>16.67%</div>
<div class="t" style="right:652.2px;top:512.4px;font-size:15.3px;color:#2b2b2b">(100)</div>
<div class="t" style="right:505.0px;top:512.4px;font-size:15.3px;color:#2b2b2b">(50)</div>
<div class="t" style="right:392.5px;top:513.0px;font-size:14.7px;color:#2b2b2b"><svg width="10.7" height="11" style="vertical-align:baseline;margin-right:3px"><path d="M5.35 0 L10.7 11 H0Z" fill="#000"/></svg>33.33%</div>
<div class="t" style="left:20.6px;top:537.1px;font-size:15.1px;color:#2b2b2b">Account Receivables</div>
<div class="t" style="right:1222.4px;top:537.4px;font-size:15.3px;color:#2b2b2b">19,304</div>
<div class="t" style="right:1074.4px;top:537.4px;font-size:15.3px;color:#2b2b2b">20,000</div>
<div class="t" style="right:921.2px;top:537.4px;font-size:15.3px;color:#2b2b2b">(696)</div>
<div class="t" style="right:800.0px;top:538.0px;font-size:14.7px;color:#f00"><svg width="10.2" height="11" style="vertical-align:baseline;margin-right:3.5px"><path d="M0 0.3 H10.2 L5.1 11Z" fill="#f00"/></svg>3.61%</div>
<div class="t" style="right:657.6px;top:537.4px;font-size:15.3px;color:#2b2b2b">21,000</div>
<div class="t" style="right:505.0px;top:537.4px;font-size:15.3px;color:#2b2b2b">(1,696)</div>
<div class="t" style="right:392.5px;top:538.0px;font-size:14.7px;color:#f00"><svg width="10.2" height="11" style="vertical-align:baseline;margin-right:3.5px"><path d="M0 0.3 H10.2 L5.1 11Z" fill="#f00"/></svg>8.79%</div>
<div class="t" style="left:20.6px;top:562.1px;font-size:15.1px;color:#2b2b2b">Notes Receivables</div>
<div class="t" style="right:1222.4px;top:562.4px;font-size:15.3px;color:#2b2b2b">13,790</div>
<div class="t" style="right:1074.4px;top:562.4px;font-size:15.3px;color:#2b2b2b">15,000</div>
<div class="t" style="right:921.2px;top:562.4px;font-size:15.3px;color:#2b2b2b">(1,210)</div>
<div class="t" style="right:800.0px;top:563.0px;font-size:14.7px;color:#f00"><svg width="10.2" height="11" style="vertical-align:baseline;margin-right:3.5px"><path d="M0 0.3 H10.2 L5.1 11Z" fill="#f00"/></svg>8.77%</div>
<div class="t" style="right:657.6px;top:562.4px;font-size:15.3px;color:#2b2b2b">14,000</div>
<div class="t" style="right:505.0px;top:562.4px;font-size:15.3px;color:#2b2b2b">(210)</div>
<div class="t" style="right:392.5px;top:563.0px;font-size:14.7px;color:#f00"><svg width="10.2" height="11" style="vertical-align:baseline;margin-right:3.5px"><path d="M0 0.3 H10.2 L5.1 11Z" fill="#f00"/></svg>1.52%</div>
<div class="t" style="left:20.6px;top:587.1px;font-size:15.1px;color:#2b2b2b">Inventory</div>
<div class="t" style="right:1217.0px;top:587.4px;font-size:15.3px;color:#2b2b2b">(215)</div>
<div class="t" style="right:1069.0px;top:587.4px;font-size:15.3px;color:#2b2b2b">(200)</div>
<div class="t" style="right:921.2px;top:587.4px;font-size:15.3px;color:#2b2b2b">(15)</div>
<div class="t" style="right:800.0px;top:588.0px;font-size:14.7px;color:#2b2b2b"><svg width="10.7" height="11" style="vertical-align:baseline;margin-right:3px"><path d="M5.35 0 L10.7 11 H0Z" fill="#000"/></svg>6.98%</div>
<div class="t" style="right:652.2px;top:587.4px;font-size:15.3px;color:#2b2b2b">(180)</div>
<div class="t" style="right:505.0px;top:587.4px;font-size:15.3px;color:#2b2b2b">(35)</div>
<div class="t" style="right:392.5px;top:588.0px;font-size:14.7px;color:#2b2b2b"><svg width="10.7" height="11" style="vertical-align:baseline;margin-right:3px"><path d="M5.35 0 L10.7 11 H0Z" fill="#000"/></svg>16.28%</div>
<div class="t" style="left:20.6px;top:612.1px;font-size:15.1px;color:#2b2b2b">Prepaid Expenses</div>
<div class="t" style="right:1217.0px;top:612.4px;font-size:15.3px;color:#2b2b2b">(14,050)</div>
<div class="t" style="right:1069.0px;top:612.4px;font-size:15.3px;color:#2b2b2b">(12,500)</div>
<div class="t" style="right:921.2px;top:612.4px;font-size:15.3px;color:#2b2b2b">(1,550)</div>
<div class="t" style="right:800.0px;top:613.0px;font-size:14.7px;color:#2b2b2b"><svg width="10.7" height="11" style="vertical-align:baseline;margin-right:3px"><path d="M5.35 0 L10.7 11 H0Z" fill="#000"/></svg>11.03%</div>
<div class="t" style="right:652.2px;top:612.4px;font-size:15.3px;color:#2b2b2b">(13,000)</div>
<div class="t" style="right:505.0px;top:612.4px;font-size:15.3px;color:#2b2b2b">(1,050)</div>
<div class="t" style="right:392.5px;top:613.0px;font-size:14.7px;color:#2b2b2b"><svg width="10.7" height="11" style="vertical-align:baseline;margin-right:3px"><path d="M5.35 0 L10.7 11 H0Z" fill="#000"/></svg>7.47%</div>
<div class="t" style="left:20.6px;top:637.1px;font-size:15.1px;color:#2b2b2b">Accounts Payables</div>
<div class="t" style="right:1222.4px;top:637.4px;font-size:15.3px;color:#2b2b2b">870,810</div>
<div class="t" style="right:1074.4px;top:637.4px;font-size:15.3px;color:#2b2b2b">850,000</div>
<div class="t" style="right:926.6px;top:637.4px;font-size:15.3px;color:#2b2b2b">20,810</div>
<div class="t" style="right:800.0px;top:638.0px;font-size:14.7px;color:#2b2b2b"><svg width="10.7" height="11" style="vertical-align:baseline;margin-right:3px"><path d="M5.35 0 L10.7 11 H0Z" fill="#000"/></svg>2.39%</div>
<div class="t" style="right:657.6px;top:637.4px;font-size:15.3px;color:#2b2b2b">800,000</div>
<div class="t" style="right:510.4px;top:637.4px;font-size:15.3px;color:#2b2b2b">70,810</div>
<div class="t" style="right:392.5px;top:638.0px;font-size:14.7px;color:#2b2b2b"><svg width="10.7" height="11" style="vertical-align:baseline;margin-right:3px"><path d="M5.35 0 L10.7 11 H0Z" fill="#000"/></svg>8.13%</div>
<div class="t" style="left:20.6px;top:662.1px;font-size:15.1px;color:#2b2b2b">Taxes Payables</div>
<div class="t" style="right:1222.4px;top:662.4px;font-size:15.3px;color:#2b2b2b">27,177</div>
<div class="t" style="right:1074.4px;top:662.4px;font-size:15.3px;color:#2b2b2b">28,000</div>
<div class="t" style="right:921.2px;top:662.4px;font-size:15.3px;color:#2b2b2b">(823)</div>
<div class="t" style="right:800.0px;top:663.0px;font-size:14.7px;color:#f00"><svg width="10.2" height="11" style="vertical-align:baseline;margin-right:3.5px"><path d="M0 0.3 H10.2 L5.1 11Z" fill="#f00"/></svg>3.03%</div>
<div class="t" style="right:657.6px;top:662.4px;font-size:15.3px;color:#2b2b2b">25,000</div>
<div class="t" style="right:510.4px;top:662.4px;font-size:15.3px;color:#2b2b2b">2,177</div>
<div class="t" style="right:392.5px;top:663.0px;font-size:14.7px;color:#2b2b2b"><svg width="10.7" height="11" style="vertical-align:baseline;margin-right:3px"><path d="M5.35 0 L10.7 11 H0Z" fill="#000"/></svg>8.01%</div>
<div class="t" style="left:20.6px;top:687.1px;font-size:15.1px;color:#2b2b2b">Interest Payables</div>
<div class="t" style="right:1237.5px;top:688.4px;font-size:15.3px;color:#555">-</div>
<div class="t" style="right:1089.5px;top:688.4px;font-size:15.3px;color:#555">-</div>
<div class="t" style="right:941.7px;top:688.4px;font-size:15.3px;color:#555">-</div>
<div class="t" style="right:800.0px;top:688.4px;font-size:15.3px;color:#555">-</div>
<div class="t" style="right:525.5px;top:688.4px;font-size:15.3px;color:#555">-</div>
<div class="t" style="right:392.5px;top:688.4px;font-size:15.3px;color:#555">-</div>
<div class="t" style="left:20.6px;top:712.1px;font-size:15.1px;color:#2b2b2b">Dividend Payables</div>
<div class="t" style="right:1237.5px;top:713.4px;font-size:15.3px;color:#555">-</div>
<div class="t" style="right:1089.5px;top:713.4px;font-size:15.3px;color:#555">-</div>
<div class="t" style="right:941.7px;top:713.4px;font-size:15.3px;color:#555">-</div>
<div class="t" style="right:800.0px;top:713.4px;font-size:15.3px;color:#555">-</div>
<div class="t" style="right:525.5px;top:713.4px;font-size:15.3px;color:#555">-</div>
<div class="t" style="right:392.5px;top:713.4px;font-size:15.3px;color:#555">-</div>
<div class="t" style="left:20.6px;top:737.1px;font-size:15.1px;color:#2b2b2b">Other Current Liabilities</div>
<div class="t" style="right:1217.0px;top:737.4px;font-size:15.3px;color:#2b2b2b">(180,569)</div>
<div class="t" style="right:1069.0px;top:737.4px;font-size:15.3px;color:#2b2b2b">(200,000)</div>
<div class="t" style="right:926.6px;top:737.4px;font-size:15.3px;color:#2b2b2b">19,431</div>
<div class="t" style="right:800.0px;top:738.0px;font-size:14.7px;color:#f00"><svg width="10.2" height="11" style="vertical-align:baseline;margin-right:3.5px"><path d="M0 0.3 H10.2 L5.1 11Z" fill="#f00"/></svg>10.76%</div>
<div class="t" style="right:652.2px;top:737.4px;font-size:15.3px;color:#2b2b2b">(210,000)</div>
<div class="t" style="right:510.4px;top:737.4px;font-size:15.3px;color:#2b2b2b">29,431</div>
<div class="t" style="right:392.5px;top:738.0px;font-size:14.7px;color:#f00"><svg width="10.2" height="11" style="vertical-align:baseline;margin-right:3.5px"><path d="M0 0.3 H10.2 L5.1 11Z" fill="#f00"/></svg>16.30%</div>
<div class="t" style="left:20.6px;top:813.5px;font-size:15.1px;color:#2b2b2b">Property Plant and Equipment</div>
<div class="t" style="right:1217.0px;top:813.8px;font-size:15.3px;color:#2b2b2b">(14,104)</div>
<div class="t" style="right:1069.0px;top:813.8px;font-size:15.3px;color:#2b2b2b">(15,000)</div>
<div class="t" style="right:926.6px;top:813.8px;font-size:15.3px;color:#2b2b2b">896</div>
<div class="t" style="right:800.0px;top:814.4px;font-size:14.7px;color:#f00"><svg width="10.2" height="11" style="vertical-align:baseline;margin-right:3.5px"><path d="M0 0.3 H10.2 L5.1 11Z" fill="#f00"/></svg>5.68%</div>
<div class="t" style="right:652.2px;top:813.8px;font-size:15.3px;color:#2b2b2b">(13,000)</div>
<div class="t" style="right:505.0px;top:813.8px;font-size:15.3px;color:#2b2b2b">(1,104)</div>
<div class="t" style="right:392.5px;top:814.4px;font-size:14.7px;color:#2b2b2b"><svg width="10.7" height="11" style="vertical-align:baseline;margin-right:3px"><path d="M5.35 0 L10.7 11 H0Z" fill="#000"/></svg>8.41%</div>
<div class="a" style="left:18.5px;top:756.0px;width:1381.9px;height:26.0px;background:#dde9f5;border-top:1.5px solid #1c1c1c;border-bottom:2.6px solid #000"></div>
<div class="t" style="left:20.5px;top:763.7px;font-size:13.6px;color:#000;font-weight:bold">TOTAL CASH FLOW FROM OPERATING ACTIVITIES</div>
<div class="t" style="right:1222.4px;top:762.2px;font-size:15.3px;color:#000;font-weight:bold">13,746,873</div>
<div class="t" style="left:460.0px;top:762.2px;font-size:15.3px;color:#000;font-weight:bold">$</div>
<div class="t" style="right:1074.4px;top:762.2px;font-size:15.3px;color:#000;font-weight:bold">12,875,475</div>
<div class="t" style="left:581.5px;top:762.2px;font-size:15.3px;color:#000;font-weight:bold">$</div>
<div class="t" style="right:926.6px;top:762.2px;font-size:15.3px;color:#000;font-weight:bold">871,398</div>
<div class="t" style="left:730.0px;top:762.2px;font-size:15.3px;color:#000;font-weight:bold">$</div>
<div class="t" style="right:800.0px;top:762.8px;font-size:14.7px;color:#000;font-weight:bold"><svg width="10.7" height="11" style="vertical-align:baseline;margin-right:3px"><path d="M5.35 0 L10.7 11 H0Z" fill="#000"/></svg>6.34%</div>
<div class="t" style="right:657.6px;top:762.2px;font-size:15.3px;color:#000;font-weight:bold">12,160,220</div>
<div class="t" style="left:999.0px;top:762.2px;font-size:15.3px;color:#000;font-weight:bold">$</div>
<div class="t" style="right:510.4px;top:762.2px;font-size:15.3px;color:#000;font-weight:bold">1,586,653</div>
<div class="t" style="left:1146.0px;top:762.2px;font-size:15.3px;color:#000;font-weight:bold">$</div>
<div class="t" style="right:392.5px;top:762.8px;font-size:14.7px;color:#000;font-weight:bold"><svg width="10.7" height="11" style="vertical-align:baseline;margin-right:3px"><path d="M5.35 0 L10.7 11 H0Z" fill="#000"/></svg>11.54%</div>
</div>
<div class="a" style="left:153px;top:1060px;width:1817px;height:35px;background:#e6e6e6;border-top:1px solid #c3c3c3;z-index:1"></div>
<svg class="a" style="left:153px;top:1060px;z-index:2" width="1817" height="35"><g transform="translate(-153 -1060)"><path d="M191.5 1073.5 V1081.5 L187.5 1077.5Z" fill="#bdbdbd"/><path d="M223.5 1073.5 V1081.5 L227.5 1077.5Z" fill="#bdbdbd"/><rect x="278.3" y="1065" width="1.2" height="25" fill="#a9a9a9"/><rect x="398.2" y="1060" width="180" height="29.5" fill="#fff"/><rect x="398.2" y="1060" width="1.3" height="31" fill="#a9a9a9"/><rect x="577.2" y="1060" width="1.2" height="31" fill="#a9a9a9"/><rect x="398.2" y="1088.6" width="180.2" height="2.2" fill="#217346"/><rect x="640.5" y="1065.3" width="1.2" height="24" fill="#a9a9a9"/><rect x="1208" y="1072" width="2.4" height="2.4" fill="#b3b3b3"/><rect x="1208" y="1077.3" width="2.4" height="2.4" fill="#b3b3b3"/><rect x="1208" y="1082.6" width="2.4" height="2.4" fill="#b3b3b3"/><rect x="1595" y="1068.5" width="330" height="18" fill="#dadada"/><rect x="1227.7" y="1068.7" width="19" height="17.6" rx="1.5" fill="#fff" stroke="#a3a3a3" stroke-width="1.4"/><rect x="1246.2" y="1068.7" width="348.8" height="17.6" rx="1" fill="#fff" stroke="#a3a3a3" stroke-width="1.4"/><path d="M1238.5 1073.5 V1081.5 L1234.3 1077.5Z" fill="#6e6e6e"/><rect x="1925" y="1069.2" width="16.6" height="17" fill="#fff" stroke="#a3a3a3" stroke-width="1.2"/><path d="M1931.5 1073.5 V1081.5 L1935.7 1077.5Z" fill="#6e6e6e"/></g></svg>
<div class="t" style="left:295px;top:1067.5px;font-size:16px;color:#444;z-index:2">Live Report</div>
<div class="t" style="left:415px;top:1067.2px;font-size:15.9px;color:#217346;font-weight:bold;z-index:2">Published Example</div>
<div class="t" style="left:594.3px;top:1067.5px;font-size:16px;color:#444;z-index:2">Info</div>
<svg class="a" style="left:1943px;top:239px;z-index:2" width="27" height="821"><g transform="translate(-1943 -239)"><rect x="1943" y="239" width="27" height="821" fill="#e6e6e6"/><rect x="1943" y="239" width="1.6" height="821" fill="#a8a8a8"/><rect x="1948.4" y="425" width="18" height="616" fill="#dadada"/><rect x="1949" y="240.5" width="17" height="16.8" fill="#fff" stroke="#a3a3a3" stroke-width="1.2"/><path d="M1953.5 250.5 H1961.5 L1957.5 246.3Z" fill="#6e6e6e"/><rect x="1948.6" y="258.2" width="17.6" height="166.6" rx="1" fill="#fff" stroke="#a3a3a3" stroke-width="1.4"/><rect x="1949" y="1041" width="17" height="17" fill="#fff" stroke="#a3a3a3" stroke-width="1.2"/><path d="M1953.5 1048 H1961.5 L1957.5 1052.2Z" fill="#6e6e6e"/><rect x="1943" y="1058.6" width="27" height="1.5" fill="#e6e6e6"/></g></svg>
<!--/REPORT-->
<!-- frame overlay -->
<svg class="a" style="left:0;top:0;z-index:100" width="2000" height="1125">
<path fill="#fff" fill-rule="evenodd" d="M-5 -5H2005V1130H-5Z M27 0H1972A27 27 0 0 1 1999 27V1098A27 27 0 0 1 1972 1125H27A27 27 0 0 1 0 1098V27A27 27 0 0 1 27 0Z"/>
<rect x="2" y="2" width="1995" height="1121" rx="25" ry="25" fill="none" stroke="#b3b5b9" stroke-width="4"/>
</svg>
</body></html>
